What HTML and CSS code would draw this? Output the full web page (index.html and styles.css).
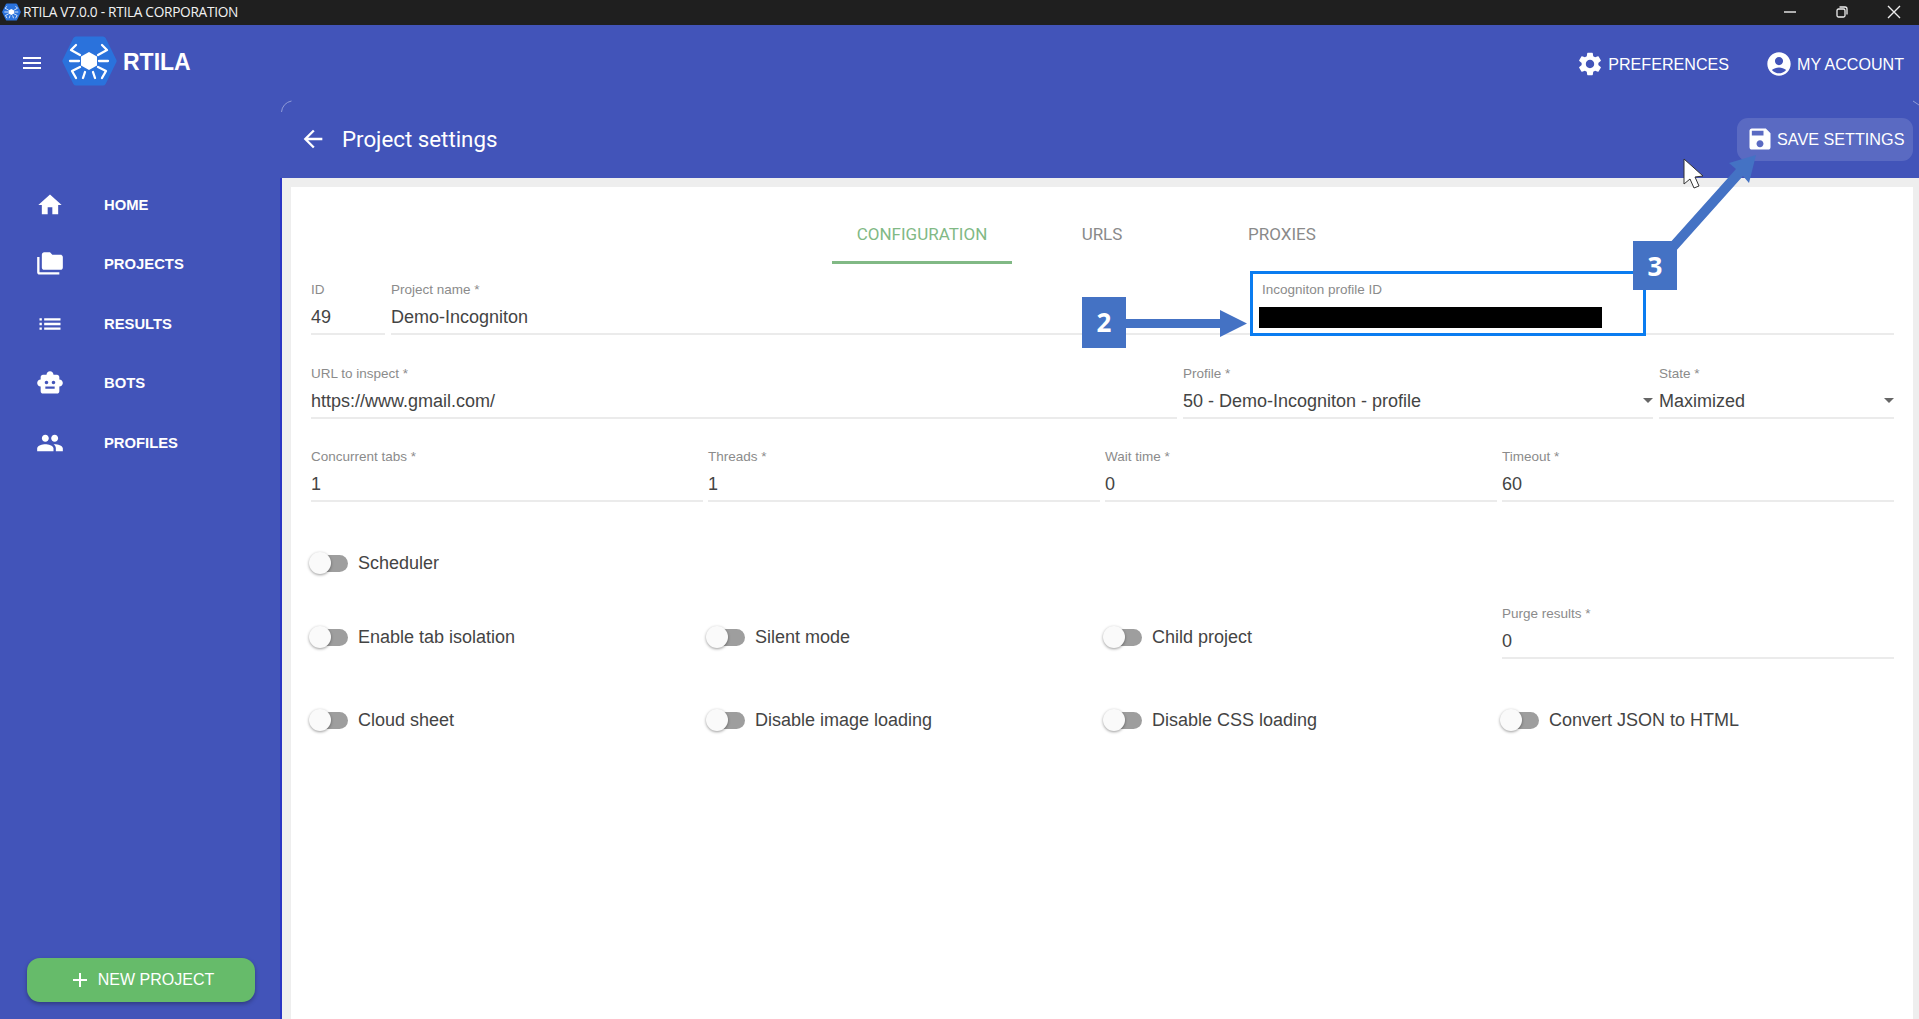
FILE: index.html
```html
<!DOCTYPE html>
<html lang="en">
<head>
<meta charset="utf-8">
<title>RTILA V7.0.0 - RTILA CORPORATION</title>
<link rel="stylesheet" href="styles.css">
</head>
<body>
<svg class="defs" width="0" height="0" aria-hidden="true">
  <symbol id="logo" viewBox="0 0 55 52">
    <path d="M14 1.500h27a3 3 0 0 1 2.600 1.500l10.600 21.500a3 3 0 0 1 0 3L43.600 49a3 3 0 0 1-2.600 1.500H14a3 3 0 0 1-2.600-1.500L.8 27.500a3 3 0 0 1 0-3L11.400 3A3 3 0 0 1 14 1.500z" fill="#2a72dc"/>
    <path d="M27 17l8 4.500v9L27 35l-8-4.500v-9z" fill="#fff"/>
    <path d="M18 20L9 15L14 10M36 20L45 15L40 10M17 26H8M37 26H46M18 32L10 36L14 43M36 32L44 36L40 43M23 37L21 43M31 37L33 43" fill="none" stroke="#fff" stroke-width="2.300" stroke-linecap="round" stroke-linejoin="round"/>
  </symbol>
</svg>

<header class="titlebar">
  <div class="titlebar-name">
    <svg class="titlebar-logo"><use href="#logo"/></svg>
    <span>RTILA V7.0.0 - RTILA CORPORATION</span>
  </div>
  <div class="window-controls">
    <svg class="win-icon" viewBox="0 0 14 14"><path d="M1 7h12" stroke="#eee" stroke-width="1.400"/></svg>
    <svg class="win-icon" viewBox="0 0 14 14"><path d="M2 5.500a1.500 1.500 0 0 1 1.500-1.500h5A1.500 1.500 0 0 1 10 5.500v5A1.500 1.500 0 0 1 8.500 12h-5A1.500 1.500 0 0 1 2 10.500zM4.500 2h5.500a2 2 0 0 1 2 2v5.500" fill="none" stroke="#eee" stroke-width="1.300"/></svg>
    <svg class="win-icon" viewBox="0 0 14 14"><path d="M1 1l12 12M13 1L1 13" stroke="#eee" stroke-width="1.400"/></svg>
  </div>
</header>

<div class="appbar">
  <div class="brand">
    <svg class="icon menu-icon" viewBox="0 0 24 24"><path d="M3 18h18v-2H3v2zm0-5h18v-2H3v2zm0-7v2h18V6H3z"/></svg>
    <svg class="brand-logo"><use href="#logo"/></svg>
    <span class="brand-name">RTILA</span>
  </div>
  <nav class="appbar-actions">
    <a class="appbar-link">
      <svg class="icon appbar-icon" viewBox="0 0 24 24"><path d="M19.140 12.940c.04-.3.06-.61.06-.94 0-.32-.02-.64-.07-.94l2.030-1.580c.18-.14.23-.41.12-.61l-1.920-3.320c-.12-.22-.37-.29-.59-.22l-2.390.96c-.5-.38-1.030-.7-1.620-.94l-.36-2.540c-.04-.24-.24-.41-.48-.41h-3.840c-.24 0-.43.17-.47.41l-.36 2.540c-.59.24-1.130.57-1.620.94l-2.390-.96c-.22-.08-.47 0-.59.22L2.740 8.870c-.12.21-.08.47.12.61l2.030 1.580c-.05.3-.09.63-.09.94s.02.64.07.94l-2.030 1.580c-.18.14-.23.41-.12.61l1.920 3.320c.12.22.37.29.59.22l2.390-.96c.5.38 1.030.7 1.620.94l.36 2.540c.05.24.24.41.48.41h3.840c.24 0 .44-.17.47-.41l.36-2.540c.59-.24 1.130-.56 1.620-.94l2.390.96c.22.08.47 0 .59-.22l1.920-3.320c.12-.22.07-.47-.12-.61l-2.010-1.580zM12 15.600c-1.980 0-3.600-1.620-3.600-3.600s1.620-3.600 3.600-3.600 3.600 1.620 3.600 3.600-1.620 3.600-3.600 3.600z"/></svg>
      PREFERENCES
    </a>
    <a class="appbar-link">
      <svg class="icon appbar-icon" viewBox="0 0 24 24"><path d="M12 2C6.480 2 2 6.480 2 12s4.480 10 10 10 10-4.480 10-10S17.520 2 12 2zm0 4c1.930 0 3.500 1.570 3.500 3.500S13.930 13 12 13s-3.500-1.570-3.500-3.500S10.070 6 12 6zm0 14c-2.030 0-4.430-.82-6.140-2.880C7.550 15.800 9.680 15 12 15s4.450.8 6.140 2.120C16.430 19.180 14.030 20 12 20z"/></svg>
      MY ACCOUNT
    </a>
  </nav>
</div>

<div class="shell">
  <aside class="sidebar">
    <ul class="side-nav">
      <li class="side-item"><svg class="icon side-icon" viewBox="0 0 24 24"><path d="M10 20v-6h4v6h5v-8h3L12 3 2 12h3v8z"/></svg>HOME</li>
      <li class="side-item"><svg class="icon side-icon" viewBox="0 0 24 24"><path d="M3 19h17v2H3c-1.100 0-2-.9-2-2V6h2v13zM23 6v9c0 1.100-.9 2-2 2H7c-1.100 0-2-.9-2-2l.01-11c0-1.100.89-2 1.990-2h5l2 2h7c1.100 0 2 .9 2 2z"/></svg>PROJECTS</li>
      <li class="side-item"><svg class="icon side-icon" viewBox="0 0 24 24"><path d="M3 13h2v-2H3v2zm0 4h2v-2H3v2zm0-8h2V7H3v2zm4 4h14v-2H7v2zm0 4h14v-2H7v2zM7 7v2h14V7H7z"/></svg>RESULTS</li>
      <li class="side-item"><svg class="icon side-icon" viewBox="0 0 24 24"><path d="M20 9V7c0-1.100-.9-2-2-2h-3c0-1.660-1.340-3-3-3S9 3.340 9 5H6c-1.100 0-2 .9-2 2v2c-1.660 0-3 1.340-3 3s1.340 3 3 3v4c0 1.100.9 2 2 2h12c1.100 0 2-.9 2-2v-4c1.660 0 3-1.340 3-3s-1.340-3-3-3zM7.500 11.500c0-.83.67-1.500 1.500-1.500s1.500.67 1.500 1.500S9.830 13 9 13s-1.500-.67-1.500-1.500zM16 17H8v-2h8v2zm-1-4c-.83 0-1.500-.67-1.500-1.500S14.170 10 15 10s1.500.67 1.500 1.500S15.830 13 15 13z"/></svg>BOTS</li>
      <li class="side-item"><svg class="icon side-icon" viewBox="0 0 24 24"><path d="M16 11c1.660 0 2.990-1.340 2.990-3S17.660 5 16 5c-1.660 0-3 1.340-3 3s1.340 3 3 3zm-8 0c1.660 0 2.990-1.340 2.990-3S9.660 5 8 5C6.340 5 5 6.340 5 8s1.340 3 3 3zm0 2c-2.330 0-7 1.170-7 3.500V19h14v-2.500c0-2.330-4.670-3.500-7-3.500zm8 0c-.29 0-.62.02-.97.05 1.160.84 1.970 1.970 1.970 3.450V19h6v-2.500c0-2.330-4.670-3.500-7-3.500z"/></svg>PROFILES</li>
    </ul>
    <button class="new-project">
      <svg class="icon plus-icon" viewBox="0 0 24 24"><path d="M19 13h-6v6h-2v-6H5v-2h6V5h2v6h6v2z"/></svg>
      NEW PROJECT
    </button>
  </aside>

  <main class="main">
    <div class="page-head">
      <svg class="icon back-icon" viewBox="0 0 24 24"><path d="M20 11H7.830l5.590-5.590L12 4l-8 8 8 8 1.410-1.410L7.830 13H20v-2z"/></svg>
      <h1 class="page-title">Project settings</h1>
      <button class="save-btn">
        <svg class="icon save-icon" viewBox="0 0 24 24"><path d="M17 3H5c-1.110 0-2 .9-2 2v14c0 1.100.89 2 2 2h14c1.100 0 2-.9 2-2V7l-4-4zm-5 16c-1.660 0-3-1.340-3-3s1.340-3 3-3 3 1.340 3 3-1.340 3-3 3zm3-10H5V5h10v4z"/></svg>
        SAVE SETTINGS
      </button>
    </div>
    <div class="band">
      <section class="card">
        <div class="tabs">
          <div class="tab tab-active">CONFIGURATION</div>
          <div class="tab">URLS</div>
          <div class="tab">PROXIES</div>
        </div>
        <div class="form">
          <div class="row row-name">
            <div class="field"><label class="field-label">ID</label><div class="field-value">49</div></div>
            <div class="field"><label class="field-label">Project name *</label><div class="field-value">Demo-Incogniton</div></div>
            <div class="field"><label class="field-label">Incogniton profile ID</label><div class="field-value">&nbsp;</div></div>
          </div>
          <div class="row row-url">
            <div class="field"><label class="field-label">URL to inspect *</label><div class="field-value">https://www.gmail.com/</div></div>
            <div class="field"><label class="field-label">Profile *</label><div class="field-value">50 - Demo-Incogniton - profile</div><span class="caret"></span></div>
            <div class="field"><label class="field-label">State *</label><div class="field-value">Maximized</div><span class="caret"></span></div>
          </div>
          <div class="row row-four">
            <div class="field"><label class="field-label">Concurrent tabs *</label><div class="field-value">1</div></div>
            <div class="field"><label class="field-label">Threads *</label><div class="field-value">1</div></div>
            <div class="field"><label class="field-label">Wait time *</label><div class="field-value">0</div></div>
            <div class="field"><label class="field-label">Timeout *</label><div class="field-value">60</div></div>
          </div>
          <div class="switch-grid">
            <div class="switch switch-first"><span class="track"><span class="thumb"></span></span>Scheduler</div>
          </div>
          <div class="switch-grid switch-grid-purge">
            <div class="switch"><span class="track"><span class="thumb"></span></span>Enable tab isolation</div>
            <div class="switch"><span class="track"><span class="thumb"></span></span>Silent mode</div>
            <div class="switch"><span class="track"><span class="thumb"></span></span>Child project</div>
            <div class="field"><label class="field-label">Purge results *</label><div class="field-value">0</div></div>
          </div>
          <div class="switch-grid switch-grid-last">
            <div class="switch"><span class="track"><span class="thumb"></span></span>Cloud sheet</div>
            <div class="switch"><span class="track"><span class="thumb"></span></span>Disable image loading</div>
            <div class="switch"><span class="track"><span class="thumb"></span></span>Disable CSS loading</div>
            <div class="switch"><span class="track"><span class="thumb"></span></span>Convert JSON to HTML</div>
          </div>
        </div>
      </section>
    </div>
  </main>
</div>

<div class="highlight-box"></div>
<div class="redaction"></div>
<div class="callout callout-2">2</div>
<div class="callout callout-3">3</div>
<svg class="overlay" viewBox="0 0 1919 1019">
  <path d="M1126 319h94v-9l27 13.500-27 13.500v-9h-94z" fill="#4472c4"/>
  <path d="M1668 245L1736 169L1729 163L1756 155L1749 183L1743 176L1675 252z" fill="#4472c4"/>
  <path d="M1684 159v25l6-5 4 9 5-2-4-9 8-1z" fill="#fff" stroke="#333" stroke-width="1"/>
  <path d="M281.500 112a12 12 0 0 1 10-11" fill="none" stroke="#8f9bd8" stroke-width="1"/>
  <path d="M1913 101l6 4" fill="none" stroke="#8f9bd8" stroke-width="1"/>
</svg>
</body>
</html>
```

FILE: styles.css
```css
* { box-sizing: border-box; }
html, body { height: 100%; }
body {
  margin: 0;
  height: 100vh;
  display: flex;
  flex-direction: column;
  overflow: hidden;
  position: relative;
  background: #4254b9;
  color: #444;
  font-family: "Liberation Sans", Arial, sans-serif;
}
.defs { position: absolute; }
.icon { display: block; fill: #fff; flex: none; }

/* window title bar */
.titlebar {
  height: 25px;
  flex: none;
  background: #1f1f1f;
  color: #f2f2f2;
  display: flex;
  align-items: center;
  justify-content: space-between;
}
.titlebar-name {
  display: flex;
  align-items: center;
  gap: 2px;
  padding: 0 0 2px 2px;
  font-family: "Open Sans", sans-serif;
  font-size: 13.700px;
  letter-spacing: -0.3px;
}
.titlebar-logo { width: 19px; height: 18px; }
.window-controls { display: flex; align-items: center; gap: 38px; padding: 0 18px 2px 0; }
.win-icon { width: 14px; height: 14px; display: block; }

/* top application bar */
.appbar {
  height: 75px;
  flex: none;
  display: flex;
  justify-content: space-between;
  padding: 10px 15px 0 20px;
}
.brand { display: flex; align-items: flex-start; }
.menu-icon { width: 24px; height: 24px; margin: 16px 18px 0 0; }
.brand-logo { width: 55px; height: 52px; }
.brand-name { font-size: 23px; font-weight: 700; color: #fff; margin: 13px 0 0 6px; line-height: 28px; }
.appbar-actions { display: flex; gap: 36px; align-items: flex-start; padding-top: 15px; }
.appbar-link {
  display: flex;
  align-items: center;
  gap: 4px;
  color: #fff;
  font-size: 16.100px;
  line-height: 26px;
  height: 28px;
  padding-bottom: 1px;
}
.appbar-icon { width: 28px; height: 28px; margin-bottom: -1px; }

.shell { flex: 1; min-height: 0; display: grid; grid-template-columns: 280px 1fr; }

/* sidebar */
.sidebar {
  display: flex;
  flex-direction: column;
  justify-content: space-between;
  padding: 75px 0 17px;
}
.side-nav { list-style: none; margin: 0; padding: 0; display: flex; flex-direction: column; }
.side-item {
  height: 59.500px;
  display: flex;
  align-items: center;
  gap: 40px;
  padding-left: 36px;
  color: #fff;
  font-size: 14.800px;
  font-weight: 700;
}
.side-icon { width: 28px; height: 28px; }
.new-project {
  align-self: flex-start;
  margin-left: 27px;
  width: 228px;
  height: 44px;
  border: 0;
  border-radius: 13px;
  background: #66bb6a;
  color: #fff;
  font: 400 16px "Liberation Sans", Arial, sans-serif;
  display: flex;
  align-items: center;
  justify-content: center;
  gap: 6px;
  box-shadow: 0 2px 4px rgba(0, 0, 0, .3);
}
.plus-icon { width: 24px; height: 24px; }

/* main column */
.main { display: flex; flex-direction: column; min-width: 0; }
.page-head {
  height: 78px;
  flex: none;
  display: flex;
  align-items: center;
  padding: 0 6px 0 19px;
}
.back-icon { width: 28px; height: 28px; }
.page-title { margin: 0 0 0 15px; font: 400 22.300px "Roboto", sans-serif; color: #fff; flex: 1; }
.save-btn {
  width: 176px;
  height: 43px;
  border: 0;
  border-radius: 11px;
  background: rgba(255, 255, 255, .13);
  color: #fff;
  font: 400 16.200px "Liberation Sans", Arial, sans-serif;
  display: flex;
  align-items: center;
  gap: 3px;
  padding: 0 0 0 9px;
  white-space: nowrap;
}
.save-icon { width: 28px; height: 28px; }
.band { flex: 1; min-height: 0; background: #eeeeee; border-left: 2px solid #2a35c4; padding: 9px 6px 0 9px; }
.card { height: 100%; background: #fff; padding-top: 29px; }

/* tabs */
.tabs { display: flex; justify-content: center; }
.tab {
  width: 180px;
  height: 48px;
  padding-top: 8px;
  text-align: center;
  font: 400 17px "Roboto", sans-serif;
  line-height: 20px;
  color: #8a8a8a;
}
.tab-active { color: #81b985; border-bottom: 3px solid #81b985; }

/* form */
.form { padding: 18px 19px 0 20px; }
.row { display: grid; column-gap: 6px; margin-bottom: 30.500px; }
.row-name { grid-template-columns: 74px 1fr 632px; }
.row-url { grid-template-columns: 1fr 470px 235px; }
.row-four { grid-template-columns: repeat(4, 1fr); column-gap: 5px; margin-bottom: 0; }
.field { position: relative; height: 53px; border-bottom: 2px solid #ebebeb; }
.field-label { display: block; height: 16px; font-size: 13.500px; line-height: 16px; color: #8b8b8b; }
.field-value { margin-top: 7px; font-size: 18px; line-height: 24px; color: #444; white-space: nowrap; }
.caret {
  position: absolute;
  right: 0;
  top: 32px;
  border-left: 5px solid transparent;
  border-right: 5px solid transparent;
  border-top: 5px solid #666;
}

/* switches */
.switch-grid { display: grid; grid-template-columns: repeat(4, 1fr); column-gap: 5px; align-items: end; margin-top: 41px; }
.switch-grid-purge { margin-top: 23px; }
.switch-grid-last { margin-top: 39px; }
.switch {
  height: 44px;
  display: flex;
  align-items: center;
  gap: 10px;
  margin-left: -2px;
  font-size: 18px;
  color: #444;
}
.switch-first { height: 40px; }
.track { position: relative; width: 39px; height: 17px; flex: none; display: block; }
.track::before {
  content: "";
  position: absolute;
  left: 8px;
  right: 0;
  top: 0;
  bottom: 0;
  background: #9e9e9e;
  border-radius: 0 9px 9px 0;
}
.thumb {
  position: absolute;
  left: 0;
  top: -3px;
  width: 22px;
  height: 22px;
  border-radius: 50%;
  background: #fafafa;
  box-shadow: 0 1px 3px rgba(0, 0, 0, .4);
}

/* annotations laid over the screenshot */
.overlay { position: absolute; left: 0; top: 0; width: 1919px; height: 1019px; pointer-events: none; }
.highlight-box { position: absolute; left: 1250px; top: 271px; width: 396px; height: 65px; border: 3px solid #0a7cf0; }
.redaction { position: absolute; left: 1259px; top: 307px; width: 343px; height: 21px; background: #000; }
.callout {
  position: absolute;
  width: 44px;
  background: #4472c4;
  color: #fff;
  font: 700 26px "Open Sans", sans-serif;
  display: flex;
  align-items: center;
  justify-content: center;
}
.callout-2 { left: 1082px; top: 297px; height: 51px; padding-bottom: 2px; }
.callout-3 { left: 1633px; top: 241px; height: 49px; }
```
